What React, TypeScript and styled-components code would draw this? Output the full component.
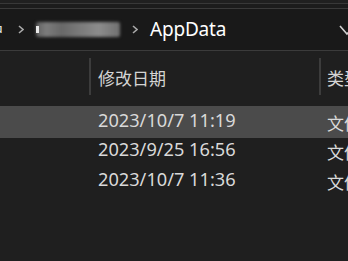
import React from "react";
import styled, { createGlobalStyle } from "styled-components";

const Global = createGlobalStyle`
  html, body { margin: 0; padding: 0; background: #1f1f1f; overflow: hidden; }
  body { font-family: "Segoe UI", "Noto Sans", "Noto Sans CJK SC", sans-serif; }
`;

const Page = styled.div`
  width: 348px;
  height: 261px;
  background: #1f1f1f;
  display: flex;
  flex-direction: column;
  overflow: hidden;
`;

const TopStrip = styled.div`
  height: 3px;
  background: #202020;
  border-bottom: 1px solid #383838;
`;

const Gap = styled.div`
  height: 4px;
  background: #1c1c1c;
  border-bottom: 1px solid #3a3a3a;
`;

const AddressBar = styled.div`
  height: 41px;
  background: #191919;
  border-bottom: 1px solid #3b3b3b;
  display: flex;
  align-items: center;
  position: relative;
  overflow: hidden;
`;

const CutText = styled.span`
  font-family: "Noto Sans CJK SC", sans-serif;
  font-size: 16px;
  color: #e0e0e0;
  margin-left: -12px;
  width: 16px;
  line-height: 1;
`;

const Chevron = styled.svg<{ $ml: number }>`
  margin-left: ${(p) => p.$ml}px;
  flex: none;
`;

const Blur = styled.div`
  margin-left: 12px;
  width: 84px;
  height: 18px;
  display: flex;
  align-items: center;
  position: relative;
`;

const BlurBlob = styled.div`
  width: 84px;
  height: 15px;
  filter: blur(1.5px);
  background: linear-gradient(
    90deg,
    #5e5e5e 0%,
    #7c7c7c 12%,
    #686868 30%,
    #787878 50%,
    #8c8c8c 75%,
    #707070 100%
  );
  border-radius: 2px;
`;

const BlurEdge = styled.div`
  position: absolute;
  left: 0;
  top: 5px;
  width: 3px;
  height: 7px;
  background: #e8e8e8;
`;

const Crumb = styled.span`
  margin-left: 12px;
  font-size: 19px;
  color: #ffffff;
  font-family: "Segoe UI", "Noto Sans", sans-serif;
  letter-spacing: -0.2px;
  line-height: 1;
  padding-bottom: 1px;
`;

const RightArrow = styled.svg`
  position: absolute;
  right: -8px;
  top: 15px;
`;

const Header = styled.div`
  height: 53px;
  display: flex;
  align-items: center;
`;

const Cell = styled.div<{ $w?: number; $pad?: number }>`
  ${(p) => (p.$w ? `width: ${p.$w}px; flex: none;` : "flex: 1;")}
  height: 100%;
  display: flex;
  align-items: center;
  padding-left: ${(p) => p.$pad ?? 0}px;
  box-sizing: border-box;
  position: relative;
  white-space: nowrap;
  overflow: hidden;
`;

const Sep = styled.div`
  position: absolute;
  left: 0;
  top: 7px;
  bottom: 9px;
  width: 2px;
  background: #3c3c3c;
`;

const HeadText = styled.span`
  font-family: "Noto Sans CJK SC", sans-serif;
  font-size: 17px;
  color: #d4d4d4;
  line-height: 1;
`;

const Row = styled.div<{ $active?: boolean }>`
  height: ${(p) => (p.$active ? 32 : 30)}px;
  margin-bottom: ${(p) => (p.$active ? -2 : 0)}px;
  display: flex;
  align-items: center;
  background: ${(p) => (p.$active ? "#4b4b4b" : "transparent")};
  position: relative;
  z-index: ${(p) => (p.$active ? 0 : 1)};
`;

const RowText = styled.span`
  font-family: "Segoe UI", "Noto Sans", sans-serif;
  font-size: 18.2px;
  color: #d9d9d9;
  line-height: 1;
  padding-bottom: 4px;
`;

const TypeText = styled.span`
  font-family: "Noto Sans CJK SC", sans-serif;
  font-size: 17px;
  color: #d9d9d9;
  line-height: 1;
`;

const Spacer = styled.div`
  height: 1px;
  flex: none;
  margin-top: 1px;
`;

const rows = [
  { date: "2023/10/7 11:19", active: true },
  { date: "2023/9/25 16:56" },
  { date: "2023/10/7 11:36" },
];

export default function App() {
  return (
    <Page>
      <Global />
      <TopStrip />
      <Gap />
      <AddressBar>
        <CutText>户</CutText>
        <Chevron $ml={14} width="6" height="9" viewBox="0 0 6 9">
          <polyline points="1,1 5,4.5 1,8" fill="none" stroke="#a8a8a8" strokeWidth="1.6" />
        </Chevron>
        <Blur>
          <BlurBlob />
          <BlurEdge />
        </Blur>
        <Chevron $ml={12} width="6" height="9" viewBox="0 0 6 9">
          <polyline points="1,1 5,4.5 1,8" fill="none" stroke="#a8a8a8" strokeWidth="1.6" />
        </Chevron>
        <Crumb>AppData</Crumb>
        <RightArrow width="18" height="12" viewBox="0 0 18 12">
          <polyline points="2,2 9,10 16,2" fill="none" stroke="#cfcfcf" strokeWidth="1.6" />
        </RightArrow>
      </AddressBar>
      <Header>
        <Cell $w={89} />
        <Cell $w={230} $pad={9}>
          <Sep />
          <HeadText>修改日期</HeadText>
        </Cell>
        <Cell $pad={8}>
          <Sep />
          <HeadText>类型</HeadText>
        </Cell>
      </Header>
      <Spacer />
      {rows.map((r) => (
        <Row key={r.date} $active={r.active}>
          <Cell $w={89} />
          <Cell $w={230} $pad={9}>
            <RowText>{r.date}</RowText>
          </Cell>
          <Cell $pad={8}>
            <TypeText>文件夹</TypeText>
          </Cell>
        </Row>
      ))}
    </Page>
  );
}
